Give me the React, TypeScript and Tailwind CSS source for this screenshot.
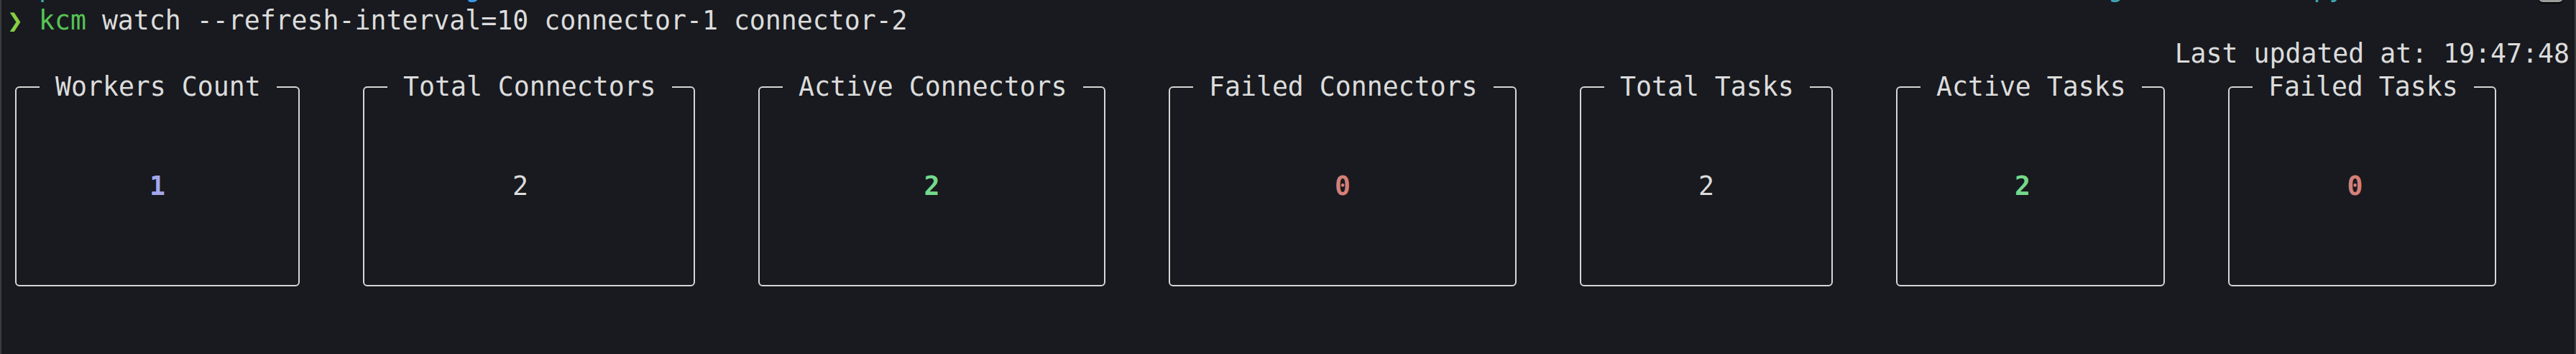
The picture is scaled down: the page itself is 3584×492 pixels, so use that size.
import React from 'react';

interface Stat {
  title: string;
  value: string;
  width: string;
  valueColor: string;
  shift: string;
}

const stats: Stat[] = [
  { title: 'Workers Count', value: '1', width: 'w-[396px]', valueColor: 'text-[#a3a8ec]', shift: '' },
  { title: 'Total Connectors', value: '2', width: 'w-[462px]', valueColor: 'text-[#dcdcdc] font-normal', shift: 'pr-[24px]' },
  { title: 'Active Connectors', value: '2', width: 'w-[483px]', valueColor: 'text-[#74d98b]', shift: '' },
  { title: 'Failed Connectors', value: '0', width: 'w-[484px]', valueColor: 'text-[#d57f78]', shift: '' },
  { title: 'Total Tasks', value: '2', width: 'w-[352px]', valueColor: 'text-[#dcdcdc] font-normal', shift: '' },
  { title: 'Active Tasks', value: '2', width: 'w-[374px]', valueColor: 'text-[#74d98b]', shift: 'pr-[22px]' },
  { title: 'Failed Tasks', value: '0', width: 'w-[373px]', valueColor: 'text-[#d57f78]', shift: 'pr-[20px]' },
];

const StatBox = ({ stat }: { stat: Stat }) => (
  <fieldset className={`${stat.width} shrink-0 border-2 border-[#d6d6d6] rounded-[6px]`}>
    <legend className="ml-[32px] px-[22px] text-[#dcdcdc]">{stat.title}</legend>
    <div className={`pt-[92px] pb-[114px] text-center ${stat.shift}`}>
      <span className={`font-bold ${stat.valueColor}`}>{stat.value}</span>
    </div>
  </fieldset>
);

export default function App() {
  return (
    <div
      className="h-[492px] overflow-hidden bg-[#181a1f] border-x-2 border-[#3a3b3f] text-[36.5px] leading-[46px] text-[#dcdcdc]"
      style={{ fontFamily: '"DejaVu Sans Mono", "Liberation Mono", monospace' }}
    >
      {/* tail of the previous prompt line, mostly scrolled off */}
      <div className="mt-[-40px] h-[46px] pl-[8px] whitespace-pre">
        {'  '}
        <span className="text-[#3fa7b6]">p</span>
        {' '.repeat(26)}
        <span className="text-[#3d9df0]">g</span>
        {' '.repeat(103)}
        <span className="text-[#3fa7b6]">g</span>
        {' '.repeat(12)}
        <span className="text-[#3fa7b6]">py</span>
        {' '.repeat(12)}
        <span className="inline-block ml-[6px] w-[34px] h-[28px] rounded-[6px] bg-[#9c9c9c] align-[-8px] shadow-[0_2px_0_#050505]" />
      </div>

      <div className="h-[46px] pl-[8px] whitespace-pre">
        <span className="text-[#86cf43]">❯</span> <span className="text-[#55c553]">kcm</span> watch --refresh-interval=10 connector-1 connector-2
      </div>

      <div className="h-[46px] pr-[7px] text-right whitespace-pre">Last updated at: 19:47:48</div>

      <div className="flex gap-[88px] pl-[19px]">
        {stats.map((s) => (
          <StatBox key={s.title} stat={s} />
        ))}
      </div>
    </div>
  );
}
